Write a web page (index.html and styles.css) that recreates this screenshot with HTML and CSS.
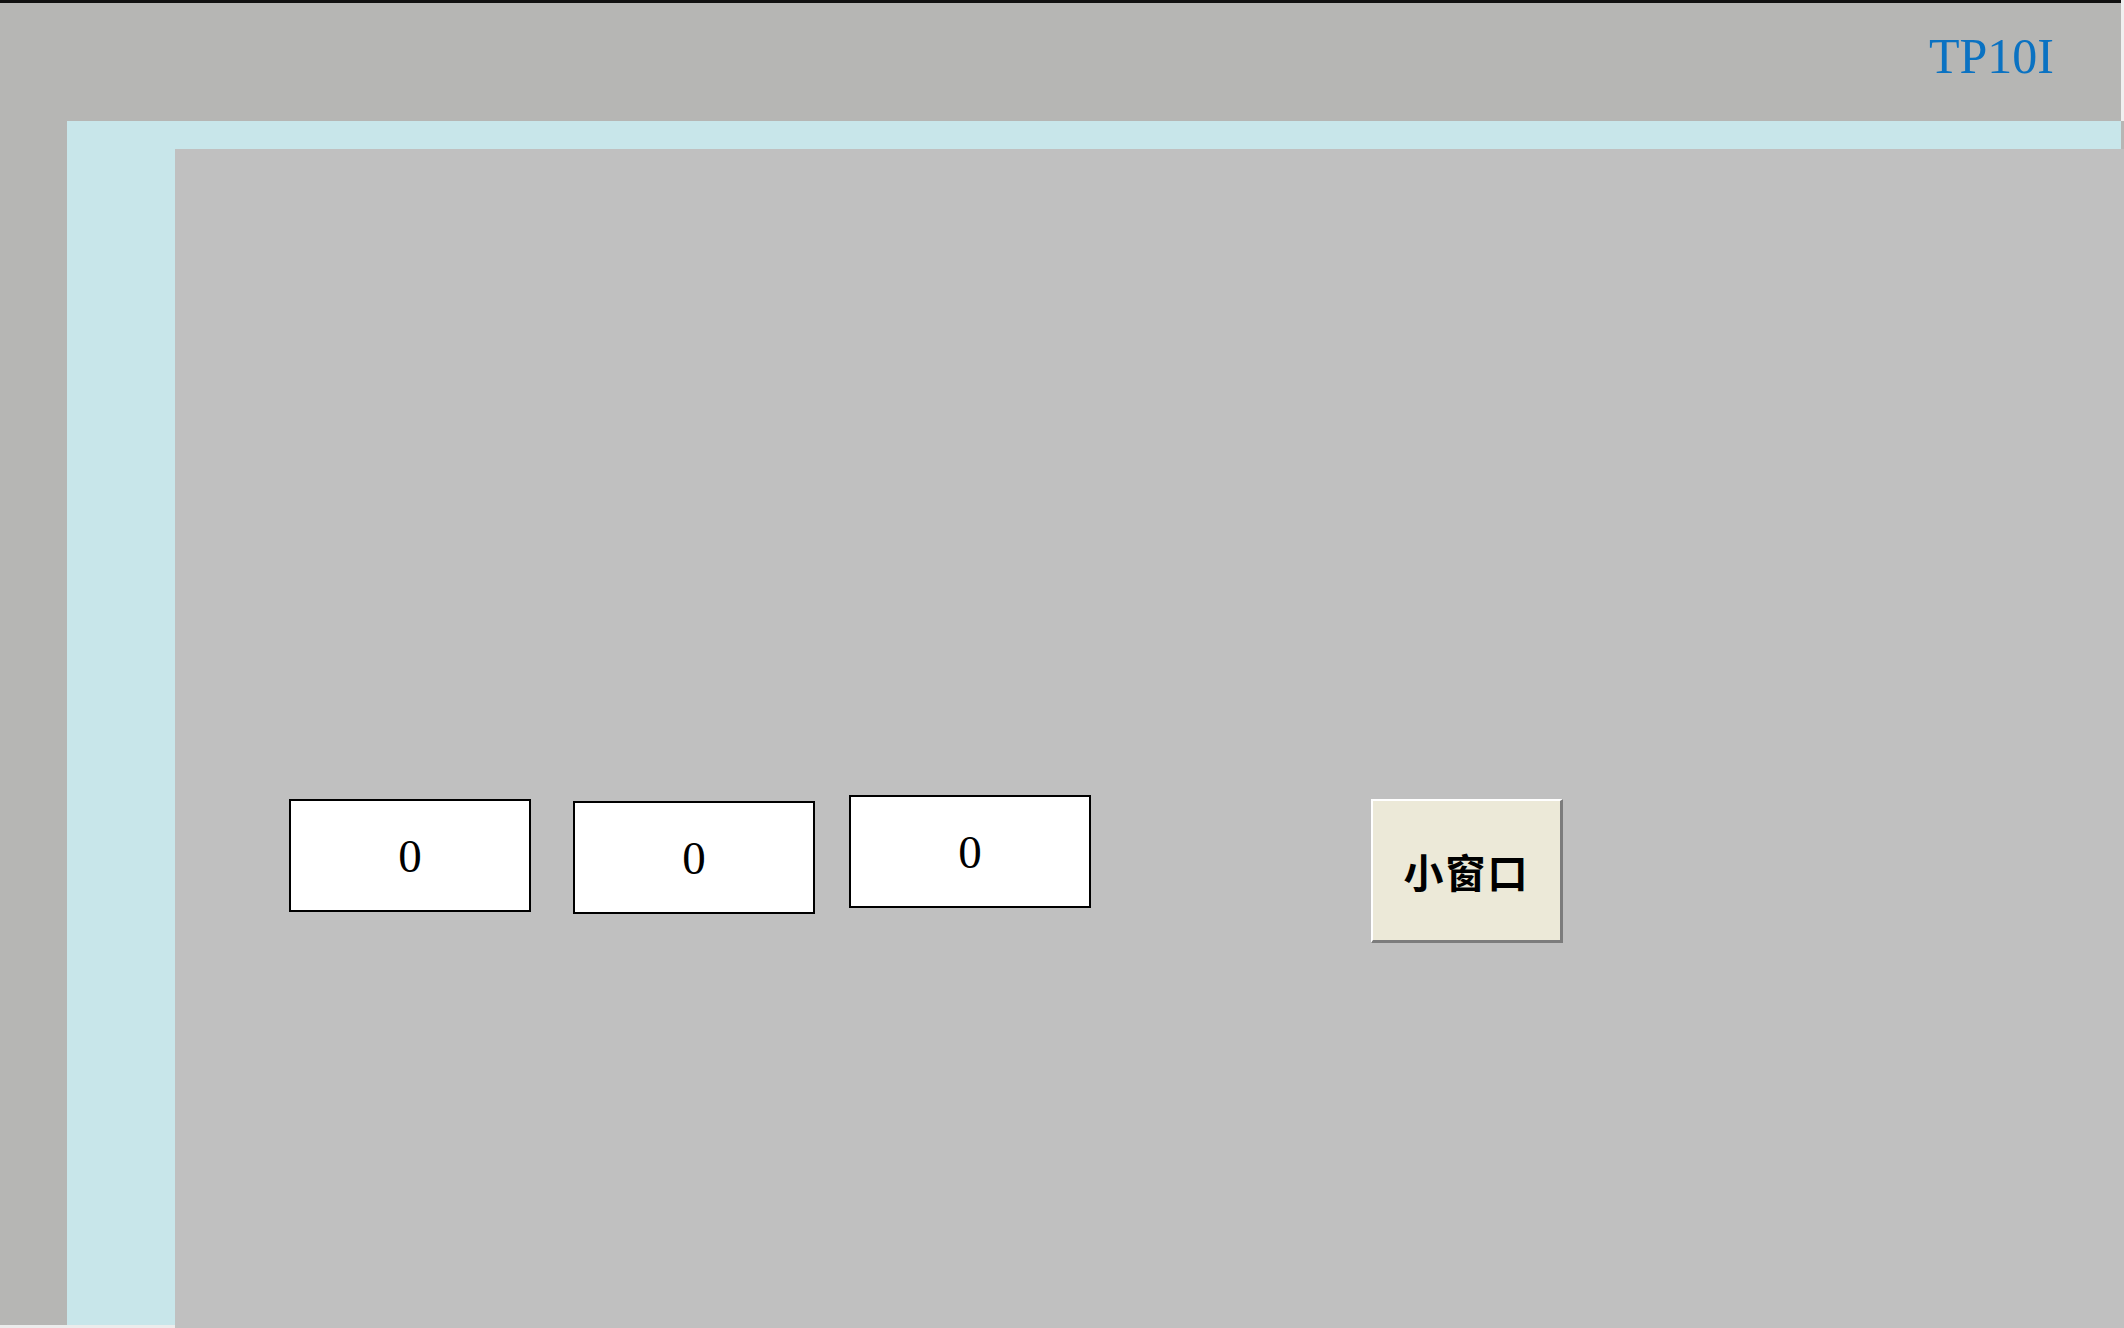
FILE: index.html
```html
<!DOCTYPE html>
<html lang="zh">
<head>
<meta charset="utf-8">
<title>TP10I</title>
<link rel="stylesheet" href="styles.css">
</head>
<body>
<div class="page">
  <header class="header">
    <span class="model">TP10I</span>
  </header>
  <div class="main">
    <div class="gutter"></div>
    <div class="body">
      <div class="cyan-top"></div>
      <div class="work">
        <div class="cyan-left"></div>
        <div class="panel">
          <div class="widgets">
            <div class="field field-1">0</div>
            <div class="field field-2">0</div>
            <div class="field field-3">0</div>
            <button class="btn">小窗口</button>
          </div>
        </div>
      </div>
    </div>
  </div>
</div>
</body>
</html>
```
FILE: styles.css
```css
html, body {
  margin: 0;
  padding: 0;
  background: #f0f0f0;
}
.page {
  width: 2124px;
  height: 1328px;
  display: flex;
  flex-direction: column;
  overflow: hidden;
}
.header {
  height: 118px;
  border-top: 3px solid #111;
  background: #b6b6b4;
  margin-right: 3px;
  box-sizing: content-box;
  padding: 28px 67px 0 0;
  height: 90px;
  text-align: right;
}
.model {
  font-family: "Liberation Serif", "Times New Roman", serif;
  font-size: 50px;
  line-height: 50px;
  color: #0a72c2;
}
.main {
  flex: 1;
  display: flex;
}
.gutter {
  width: 67px;
  background: #b6b6b4;
  border-bottom: 3px solid #ececec;
}
.body {
  flex: 1;
  display: flex;
  flex-direction: column;
  background: #b6b6b4;
}
.cyan-top {
  height: 28px;
  background: #c8e6ea;
  margin-right: 3px;
}
.work {
  flex: 1;
  display: flex;
  background: #f0f0f0;
}
.cyan-left {
  width: 108px;
  background: #c8e6ea;
  border-bottom: 3px solid #ececec;
}
.panel {
  flex: 1;
  background: #c0c0c0;
}
.widgets {
  display: flex;
  align-items: flex-start;
  padding: 646px 0 0 114px;
}
.field {
  box-sizing: border-box;
  width: 242px;
  height: 113px;
  border: 2px solid #000;
  background: #fff;
  display: flex;
  align-items: center;
  justify-content: center;
  font-family: "Liberation Serif", "Times New Roman", serif;
  font-size: 47px;
  color: #000;
}
.field-1 { margin-top: 4px; }
.field-2 { margin-top: 6px; margin-left: 42px; }
.field-3 { margin-top: 0; margin-left: 34px; }
.btn {
  box-sizing: border-box;
  width: 192px;
  height: 144px;
  margin-top: 4px;
  margin-left: 280px;
  padding: 0;
  background: #ece9d8;
  border-style: solid;
  border-width: 2px 3px 3px 2px;
  border-color: #ffffff #7c7c7c #7c7c7c #ffffff;
  display: flex;
  align-items: center;
  justify-content: center;
  font-family: "Noto Sans CJK SC", sans-serif;
  font-weight: 700;
  font-size: 40px;
  color: #000;
  letter-spacing: 2px;
}
```
